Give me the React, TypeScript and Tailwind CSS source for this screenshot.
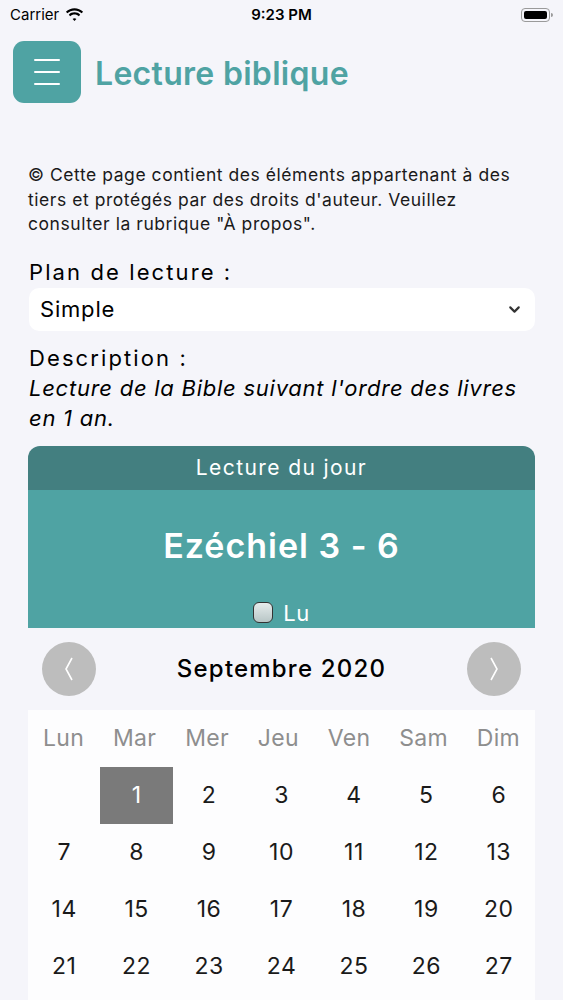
import { ChevronDown } from 'lucide-react'

const weekDays = ['Lun', 'Mar', 'Mer', 'Jeu', 'Ven', 'Sam', 'Dim']

// September 2020 starts on a Tuesday; only the rows that fit the screen
const weeks: (number | null)[][] = [
    [null, 1, 2, 3, 4, 5, 6],
    [7, 8, 9, 10, 11, 12, 13],
    [14, 15, 16, 17, 18, 19, 20],
    [21, 22, 23, 24, 25, 26, 27],
]

function StatusBar() {
    return (
        <div className="h-[30px] flex items-center justify-between px-[10px] text-[15px] text-black">
            <div className="flex items-center gap-[6px] w-[120px]">
                <span>Carrier</span>
                <svg width="19" height="14" viewBox="0 0 18 13" fill="black">
                    <path d="M9 2.2c2.6 0 5 1 6.8 2.7l1.3-1.4C14.9 1.4 12.1.2 9 .2S3.1 1.4.9 3.5l1.3 1.4C4 3.2 6.4 2.2 9 2.2z" />
                    <path d="M9 6c1.6 0 3 .6 4.1 1.6l1.3-1.4C13 4.8 11.1 4 9 4s-4 .8-5.4 2.2l1.3 1.4C6 6.6 7.4 6 9 6z" />
                    <path d="M9 9.6c.7 0 1.3.3 1.8.7L9 12.3 7.2 10.3c.5-.4 1.1-.7 1.8-.7z" />
                </svg>
            </div>
            <span className="font-semibold">9:23 PM</span>
            <div className="w-[120px] flex justify-end">
                <div className="flex items-center">
                    <div className="w-[29px] h-[14px] rounded-[4px] border border-[#9a9a9a] p-[2px]">
                        <div className="w-full h-full rounded-[2px] bg-black" />
                    </div>
                    <div className="w-[2px] h-[4px] bg-[#9a9a9a] rounded-r-sm ml-[1px]" />
                </div>
            </div>
        </div>
    )
}

export default function App() {
    return (
        <div className="w-[563px] h-[1000px] overflow-hidden bg-[#f5f5fa] font-['Inter',sans-serif]">
            <StatusBar />

            {/* Header */}
            <div className="flex items-center gap-[14px] pl-[13px] mt-[11px]">
                <button className="w-[68px] h-[62px] rounded-[11px] bg-[#4fa3a3] flex flex-col items-center justify-center gap-[10px]">
                    <span className="block w-[26px] h-[2px] bg-white rounded" />
                    <span className="block w-[26px] h-[2px] bg-white rounded" />
                    <span className="block w-[26px] h-[2px] bg-white rounded" />
                </button>
                <h1 className="mt-[4px] text-[32px] font-semibold text-[#4fa3a3] tracking-[0.3px]">Lecture biblique</h1>
            </div>

            <div className="px-[28px]">
                <p className="w-[494px] mt-[60px] text-[17.5px] leading-[24.5px] tracking-[0.55px] text-[#1a1a1a]">
                    © Cette page contient des éléments appartenant à des tiers et protégés par des droits d'auteur. Veuillez consulter la rubrique "À propos".
                </p>

                <div className="mt-[22px] text-[22px] leading-[26px] tracking-[2.1px] text-black pl-[1px]">Plan de lecture :</div>
                <div className="mt-[3px] ml-[1px] h-[43px] bg-white rounded-[10px] flex items-center justify-between pl-[11px] pr-[12px]">
                    <span className="text-[22px] tracking-[0.8px] text-black">Simple</span>
                    <ChevronDown size={17} strokeWidth={3} className="text-[#333]" />
                </div>

                <div className="mt-[14px] text-[22px] leading-[26px] tracking-[2.1px] text-black pl-[1px]">Description :</div>
                <p className="mt-[2px] text-[22px] leading-[30px] italic tracking-[0.75px] text-black pl-[1px]">
                    Lecture de la Bible suivant l'ordre des livres en 1 an.
                </p>

                {/* Lecture du jour */}
                <div className="mt-[13px] rounded-t-[12px] overflow-hidden">
                    <div className="h-[44px] bg-[#437f80] flex items-center justify-center text-[21px] tracking-[1.4px] text-white">
                        Lecture du jour
                    </div>
                    <div className="h-[138px] bg-[#4fa3a3] flex flex-col items-center">
                        <div className="mt-[36px] h-[40px] leading-[40px] text-[34px] font-semibold tracking-[1px] text-white">Ezéchiel 3 - 6</div>
                        <div className="mt-[35px] h-[24px] flex items-center gap-[10px]">
                            <span className="block w-[20px] h-[21px] rounded-[6px] border-[1.5px] border-[#333] bg-gradient-to-b from-[#e6ecec] to-[#b8c6c6]" />
                            <span className="text-[22px] leading-[24px] tracking-[0.5px] text-white">Lu</span>
                        </div>
                    </div>
                </div>

                {/* Month navigation */}
                <div className="h-[82px] flex items-center justify-between px-[14px]">
                    <button className="w-[54px] h-[54px] rounded-full bg-[#bdbdbd] flex items-center justify-center">
                        <svg width="12" height="26" viewBox="0 0 12 26" fill="none" stroke="white" strokeWidth="1.6">
                            <path d="M9 2 L3 13 L9 24" />
                        </svg>
                    </button>
                    <span className="text-[24px] font-medium tracking-[1.2px] text-black">Septembre 2020</span>
                    <button className="w-[54px] h-[54px] rounded-full bg-[#bdbdbd] flex items-center justify-center">
                        <svg width="12" height="26" viewBox="0 0 12 26" fill="none" stroke="white" strokeWidth="1.6">
                            <path d="M3 2 L9 13 L3 24" />
                        </svg>
                    </button>
                </div>

                {/* Calendar */}
                <div className="bg-[#fdfdfe] pb-[20px]">
                    <div className="flex justify-between items-center h-[57px] px-[15px]">
                        {weekDays.map((d) => (
                            <div key={d} className="text-[23px] tracking-[0.3px] text-[#8e8e8e]">{d}</div>
                        ))}
                    </div>
                    {weeks.map((week, wi) => (
                        <div key={wi} className="grid grid-cols-7">
                            {week.map((day, di) => (
                                <div
                                    key={di}
                                    className={`h-[57px] flex items-center justify-center text-[23px] tracking-[0.5px] ${day === 1 ? 'bg-[#7a7a7a] text-white' : 'text-[#1a1a1a]'}`}
                                >
                                    {day ?? ''}
                                </div>
                            ))}
                        </div>
                    ))}
                </div>
            </div>
        </div>
    )
}
